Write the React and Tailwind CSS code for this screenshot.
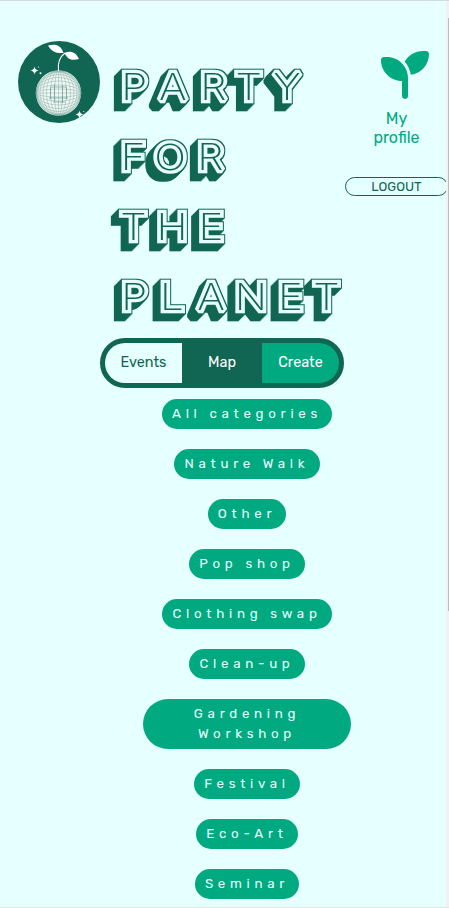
import React from "react";

// Horizontal centre of every letter, one list per line of the wordmark.
const titleLines = [
  { word: "PARTY", centres: [26.2, 64.7, 105.3, 140.8, 179], y: 44.8 },
  { word: "FOR", centres: [25.2, 62, 102.5], y: 114.8 },
  { word: "THE", centres: [25.5, 64, 103], y: 184.8 },
  { word: "PLANET", centres: [26.2, 64, 103, 143, 182.4, 218.5], y: 254.8 },
];

const letterStretch = 1.17;

const categories = [
  ["All categories", "w-[170px]"],
  ["Nature Walk", "w-[146px]"],
  ["Other", "w-[78px]"],
  ["Pop shop", "w-[116px]"],
  ["Clothing swap", "w-[170px]"],
  ["Clean-up", "w-[116px]"],
  ["Gardening Workshop", "w-[208px]"],
  ["Festival", "w-[106px]"],
  ["Eco-Art", "w-[102px]"],
  ["Seminar", "w-[104px]"],
];

const dark = "#106653";

function Logo() {
  const rings = [4, 8, 12, 15.5, 18.5, 20.7];
  return (
    <svg viewBox="0 0 82 82" className="mt-[41px] h-[82px] w-[82px] shrink-0">
      <circle cx="41" cy="41" r="41" fill={dark} />
      <circle cx="40.5" cy="52" r="22.6" fill="#f1f7f5" />
      <g fill="none" stroke="#7ba99d" strokeWidth="0.45">
        {rings.map((r) => (
          <ellipse key={`v${r}`} cx="40.5" cy="52" rx={r} ry="22.3" />
        ))}
        {rings.map((r) => (
          <ellipse key={`h${r}`} cx="40.5" cy="52" rx="22.3" ry={r} />
        ))}
        <path d="M40.5 30v44M18.5 52h44" />
      </g>
      <path d="M32.5 46v12M36.5 43v17M44.5 44v18M48.5 46v12M33 46h15M31 57h19M35 61h12" stroke="#5b9486" strokeWidth=".6" fill="none" />
      <path d="M40.5 30C39.5 22 41.5 16 47 12" fill="none" stroke="#fff" strokeWidth="1.1" />
      <path d="M30 4.5C38 2.5 43 4.5 45.5 12C39 12.5 34 11.5 30 4.5Z" fill="#fff" />
      <path d="M46.5 12C52 9 58 11 61 18C54 20 49.5 18.5 46.5 12Z" fill="#fff" />
      <g fill="#fff">
        <path d="M16.5 25.5q.5 3.5 4 4q-3.5.5-4 4q-.5-3.5-4-4q3.5-.5 4-4Z" />
        <path d="M61.5 69.5q.5 3.5 4 4q-3.5.5-4 4q-.5-3.5-4-4q3.5-.5 4-4Z" />
        <circle cx="22.5" cy="32.3" r="1" />
        <circle cx="20.5" cy="26" r=".6" />
        <circle cx="65.8" cy="70.5" r=".6" />
      </g>
    </svg>
  );
}

function Wordmark() {
  return (
    <svg viewBox="0 0 240 280" className="block h-[280px] w-[240px]">
      <defs>
        <filter id="shade" x="0" y="0" width="240" height="280" filterUnits="userSpaceOnUse" colorInterpolationFilters="sRGB">
          <feMorphology in="SourceAlpha" operator="dilate" radius="1" result="outline" />
          <feOffset in="outline" dx="-1" dy="1" result="o1" />
          <feMerge result="s1"><feMergeNode in="outline" /><feMergeNode in="o1" /></feMerge>
          <feOffset in="s1" dx="-2" dy="2" result="o2" />
          <feMerge result="s2"><feMergeNode in="s1" /><feMergeNode in="o2" /></feMerge>
          <feOffset in="s2" dx="-4" dy="4" result="o3" />
          <feMerge result="s3"><feMergeNode in="s2" /><feMergeNode in="o3" /></feMerge>
          <feFlood floodColor={dark} />
          <feComposite in2="s3" operator="in" result="block" />
          <feMerge><feMergeNode in="block" /><feMergeNode in="SourceGraphic" /></feMerge>
        </filter>
      </defs>
      <g filter="url(#shade)">
        <g
          transform={`scale(${letterStretch} 1)`}
          fill={dark}
          stroke="#e8fdfd"
          strokeWidth="6.4"
          strokeLinejoin="miter"
          strokeMiterlimit="1.6"
          textAnchor="middle"
          className="font-['Inter'] text-[36px] font-extralight [paint-order:stroke]"
        >
          {titleLines.map(({ word, centres, y }) => (
            <text key={word} x={centres.map((c) => c / letterStretch).join(" ")} y={y}>{word}</text>
          ))}
        </g>
      </g>
    </svg>
  );
}

export default function App() {
  return (
    <div className="flex h-[908px] w-[449px] overflow-hidden border-t border-b border-t-[#d5dadc] border-b-[#e0e5e5] bg-[#e6ffff] font-['Rubik','Roboto',sans-serif]">
      <div className="-mt-px h-[908px] w-[446px] shrink-0 overflow-hidden">
        <header className="flex h-[338px] items-start pl-[18px]">
          <Logo />
          <h1 className="ml-[8px] mt-[55px] w-[237px] shrink-0">
            <Wordmark />
          </h1>
          <div className="flex w-[103px] shrink-0 flex-col items-center pt-[51px]">
            <a className="flex w-[103px] flex-col items-center text-center text-[16px] leading-[19px] text-[#00a97f]">
              <svg viewBox="0 0 512 512" className="mb-[10px] ml-[17px] h-[48px] w-[48px]" fill="currentColor">
                <path d="M512 32c0 113.6-84.6 207.5-194.2 222c-7.1-53.4-30.6-101.6-65.3-139.3C290.8 46.3 364 0 448 0h32c17.7 0 32 14.3 32 32zM0 96C0 78.3 14.3 64 32 64H64c123.7 0 224 100.3 224 224v192c0 17.7-14.3 32-32 32s-32-14.3-32-32V320C100.3 320 0 219.7 0 96z" />
              </svg>
              <span>My</span>
              <span>profile</span>
            </a>
            <button className="mt-[30px] flex h-[19px] w-[103px] items-center justify-center rounded-full border border-[#106653] text-[13px] leading-none text-[#106653]">
              LOGOUT
            </button>
          </div>
        </header>
        <nav className="ml-[100px] flex h-[50px] w-[244px] overflow-hidden rounded-full border-[5px] border-[#106653] bg-[#106653] text-[14.400px] leading-[39px] text-white">
          <a className="w-[77px] bg-[#e6ffff] text-center text-[#106653]">Events</a>
          <a className="w-[80px] text-center">Map</a>
          <a className="w-[77px] bg-[#00a97f] text-center">Create</a>
        </nav>
        <ul className="ml-[143px] mt-[11px] flex w-[208px] flex-col items-center gap-5">
          {categories.map(([label, width]) => (
            <li
              key={label}
              className={`${width} shrink-0 rounded-[25px] bg-[#00a97f] px-[8px] py-[5px] text-center text-[13.333px] leading-[20px] tracking-[4.7px] text-[#e6ffff] ${label.startsWith("Garden") ? "" : "whitespace-nowrap"}`}
            >
              {label}
            </li>
          ))}
        </ul>
      </div>
      <div className="w-[3px] shrink-0 bg-[#f1f1f1] pt-[17px]">
        <div className="ml-[2px] h-[593px] w-px bg-[#bcbcbc]" />
      </div>
    </div>
  );
}
